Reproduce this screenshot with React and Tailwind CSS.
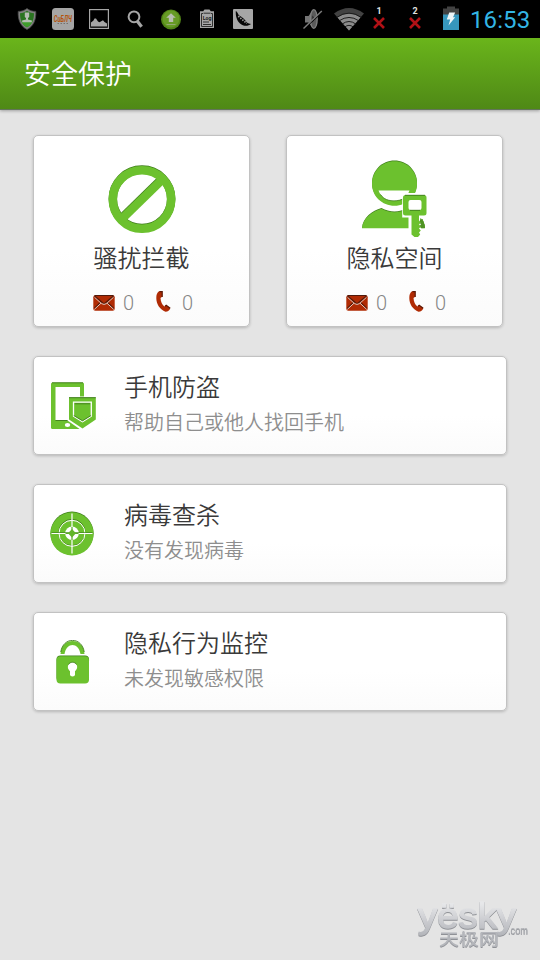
import React from 'react';

/* Status bar icons */
const ShieldUserIcon = () => (
  <svg className="ml-[17px] h-[22px] w-[20px]" viewBox="0 0 20 22">
    <path d="M10 0.5 C12.5 2.5 15.5 3.4 18.8 3.4 C19.2 12 16.5 18 10 21.5 C3.5 18 0.8 12 1.2 3.4 C4.5 3.4 7.5 2.5 10 0.5Z" fill="#808080" stroke="#4a4a4a" strokeWidth="0.8" />
    <path d="M10 2.8 C12 4.3 14.3 5 17 5.2 C17 12 14.8 16.5 10 19.3 C5.2 16.5 3 12 3 5.2 C5.7 5 8 4.3 10 2.8Z" fill="#2a7420" />
    <path d="M4 12.5c1.2 3 3 5.2 6 6.8 3-1.6 4.8-3.8 6-6.8z" fill="#3f9c2c" />
    <path d="M7.8 4.6h4.4V9l-1.2 1v1.5l3.8 1v1.7H5.2v-1.7l3.8-1V10L7.8 9z" fill="#b5bdb3" />
  </svg>
);

const CubnIcon = () => (
  <svg className="ml-[15px] h-[22px] w-[22px] overflow-visible" viewBox="0 0 22 22">
    <rect width="22" height="22" rx="3.5" fill="#a5a5a5" />
    <text x="1.8" y="14" textLength="18" lengthAdjust="spacingAndGlyphs" fontSize="9.5" fontWeight="700" fontStyle="italic" fill="#b4530b" fontFamily="Roboto, sans-serif">CuБЛЧ</text>
    <path d="M5.5 15.5h12" stroke="#6f6a66" strokeWidth="0.9" strokeDasharray="1.5 1.5" />
  </svg>
);

const PictureIcon = () => (
  <svg className="ml-[15px] h-[20px] w-[20px]" viewBox="0 0 20 20">
    <rect x="0.6" y="0.6" width="18.8" height="18.8" fill="none" stroke="#a6a6a6" strokeWidth="1.2" />
    <path d="M2 17.500v-4L4.500 11.500 5.500 9.500h1.500l2 3 1.500.8 3.500-2 1.500 1.700 2.500 1.500v3z" fill="#a6a6a6" />
  </svg>
);

const SearchIcon = () => (
  <svg className="ml-[18px] h-[20px] w-[17px]" viewBox="0 0 17 20">
    <circle cx="7" cy="7.8" r="5.4" fill="none" stroke="#a6a6a6" strokeWidth="2" />
    <path d="M10.2 12l4.4 5.8" stroke="#a6a6a6" strokeWidth="3.2" />
  </svg>
);

const UploadIcon = () => (
  <svg className="ml-[17px] h-[21px] w-[20px]" viewBox="0 0 20 21">
    <circle cx="10" cy="10.5" r="10" fill="#528517" />
    <circle cx="10" cy="10" r="8.4" fill="#679b25" />
    <path d="M10 4.2l4.8 4.6h-2.6V13H7.8V8.8H5.2z" fill="#b8bdb0" />
    <path d="M5.5 15.5h9" stroke="#9aac7d" strokeWidth="0.9" />
  </svg>
);

const LogIcon = () => (
  <svg className="ml-[19px] h-[20px] w-[14px]" viewBox="0 0 14 20">
    <path d="M0 2.2h3.2L4.5 0.5h5l1.3 1.7H14V19H0z" fill="#a6a6a6" />
    <path d="M3 4.5H1.5v13h11v-13H11M3.5 4.2h7" fill="none" stroke="#222" strokeWidth="0.9" />
    <text x="2.7" y="11" fontSize="6" fontWeight="700" fill="#1b1b1b" textLength="8.8" lengthAdjust="spacingAndGlyphs" fontFamily="Roboto, sans-serif">Log</text>
    <path d="M3 13h6M3 15.5h8" stroke="#222" strokeWidth="0.9" />
  </svg>
);

const PeasIcon = () => (
  <svg className="ml-[19px] h-[20px] w-[20px]" viewBox="0 0 20 20">
    <rect width="20" height="20" rx="1" fill="#a6a6a6" />
    <path d="M2.8 2c1.7.8 1.8 2.3 3 4.2 3.5 2 6.500 4.300 8 7.300 1.200 1 2.800 1.200 4.200 1.500-3 2.400-7.500 2.500-11-.5C3.700 11.500 2.500 6.500 2.800 2z" fill="#060606" />
    <path d="M5.3 7.2l8.500 7.300" stroke="#a6a6a6" strokeWidth="1.6" strokeDasharray="1.4 1.3" fill="none" />
  </svg>
);

const MuteIcon = () => (
  <svg className="h-[22px] w-[20px]" viewBox="0 0 20 22">
    <path d="M2 8h3.500l4-5.500v17L5.500 14.500H2z" fill="#747474" />
    <ellipse cx="10.8" cy="11" rx="3.4" ry="9.4" fill="#5a5a5a" stroke="#808080" strokeWidth="1.3" />
    <path d="M9.500 7.500q3 3.500 0 7z" fill="#111" />
    <path d="M0 21.500L18.500 4.500" stroke="#000" strokeWidth="1.6" />
    <path d="M0.500 20.500L18.800 3" stroke="#7c7c7c" strokeWidth="1.5" />
  </svg>
);

const WifiIcon = () => (
  <svg className="ml-[11px] h-[23px] w-[30px]" viewBox="0 0 30 23">
    <path d="M0 5.500Q15-5.500 30 5.500L15 22.600z" fill="#424242" />
    <path d="M3.500 9.500Q15 1.500 26.500 9.500L15 22.600z" fill="#8b8b8b" />
    <g fill="none" stroke="#111" strokeWidth="0.9">
      <path d="M2.500 9.500Q15 0.800 27.500 9.500" />
      <path d="M5.300 12.700Q15 6.200 24.700 12.700" />
      <path d="M8.200 16Q15 11 21.800 16" />
      <path d="M10.700 19Q15 15.700 19.300 19" />
    </g>
  </svg>
);

const SimSlot = ({ number }) => (
  <div className="flex h-[24px] w-[12px] flex-col items-center">
    <span className="font-['Roboto'] text-[9px] font-bold leading-[9px] text-[#e0e0e0]">{number}</span>
    <svg className="mt-[1px] h-[12px] w-[12px]" viewBox="0 0 12 12">
      <path d="M1 1l10 10M11 1L1 11" stroke="#b11116" strokeWidth="2.6" />
    </svg>
  </div>
);

const BatteryIcon = () => (
  <svg className="mb-[2px] ml-[22px] h-[24px] w-[16px]" viewBox="0 0 16 24">
    <path d="M4 0.500h8v2h4V9H0V2.500h4z" fill="#424242" />
    <path d="M0 8.500h16V24H0z" fill="#3797bd" />
    <path d="M6.200 6.500h6L10 11.200h2.200L5.500 19.500l1.700-6H3.800z" fill="#eef5f7" />
  </svg>
);

const StatusBar = () => (
  <div className="flex h-[38px] items-center bg-black">
    <ShieldUserIcon />
    <CubnIcon />
    <PictureIcon />
    <SearchIcon />
    <UploadIcon />
    <LogIcon />
    <PeasIcon />
    <div className="ml-auto flex items-center pr-[9px]">
      <MuteIcon />
      <WifiIcon />
      <div className="ml-[9px] flex gap-6">
        <SimSlot number="1" />
        <SimSlot number="2" />
      </div>
      <BatteryIcon />
      <span className="ml-[11px] w-[61px] whitespace-nowrap pt-[2px] font-['Roboto'] text-[24px] leading-[36px] tracking-[0.1px] text-[#33b5e5]">16:53</span>
    </div>
  </div>
);

/* Feature icons */
const BlockIcon = () => (
  <svg className="mb-[5px] ml-[1px] h-[68px] w-[68px]" viewBox="0 0 68 68">
    <g fill="none" strokeWidth="8.5">
      <g stroke="#3f7d1d">
        <circle cx="34" cy="33.8" r="29.2" />
        <path d="M13.500 53.300L54.500 13.300" />
      </g>
      <g stroke="#6cc12e">
        <circle cx="34" cy="34.5" r="29.2" />
        <path d="M13.700 54.100L54.700 14.100" />
      </g>
    </g>
  </svg>
);

const personHead = 'M24.5 0C37 0 47 10 47 22.5S37 44.5 24.5 44.5 2 35 2 22.5 12 0 24.5 0z';
const PrivacyIcon = () => (
  <svg className="h-[78px] w-[66px]" viewBox="0 0 66 78">
    <g transform="translate(8 0.5)">
      <path d={personHead} fill="#3f7d1d" />
      <path d={personHead} fill="#6cc12e" transform="translate(0 0.7)" />
      <path d="M8.500 30h31c-2.500 7-8.500 10.500-15.500 10.500S11 37 8.500 30z" fill="#fff" />
      <path d="M10.500 34c3.500 5 8 6.300 13.500 6.300 4 0 7.500-.6 10.500-3" fill="none" stroke="#3f7d1d" strokeWidth="0.8" />
    </g>
    <path d="M0 68C1 57 10 51 19.500 48c8 4.500 18 4.500 26 0C56 50 62 58 63 68z" fill="#3f7d1d" />
    <path d="M0 68.300C1 58 10 51.800 19.500 48.800c8 4.500 18 4.500 26 0C56 50.800 62 58 63 68.300z" fill="#6cc12e" />
    <path d="M40.200 33h27v26H60l-1.500 19H46.500V57.500h-6.300z" fill="#fff" />
    <path d="M58.500 58c2.500 2 4.500 6 4.500 10l-3.500.3-2.500-1.800 2-2-1.500-2z" fill="#4f9324" />
    <path fillRule="evenodd" d="M43.500 35h18.500q2.500 0 2.500 2.500v15.500q0 2.500-2.500 2.500H57v5l1.800 2-1.800 2 1.800 2-1.800 2 1.800 2-1.800 2 1.200 2-2.200 2.500h-3.500l-3-2.500V55.500h-6q-2.500 0-2.500-2.500V37.500q0-2.500 2.500-2.500zM48.500 40q-2 0-2 2v6q0 2 2 2h9q2 0 2-2v-6q0-2-2-2z" fill="#6cc12e" />
    <path d="M43 35.300h20M48 50.300h10" stroke="#3f7d1d" strokeWidth="0.9" />
  </svg>
);

const AntiTheftIcon = () => (
  <svg className="ml-[2px] h-[48px] w-[46px]" viewBox="0 0 46 48">
    <path d="M1.500 0.500h30q1.500 0 1.500 1.500V47H1.500Q0 47 0 45.500v-43.500Q0 0.500 1.500 0.500z" fill="#6cc12e" />
    <path d="M1 0.800h31" stroke="#3f7d1d" strokeWidth="0.9" />
    <path d="M4.500 5H29V38H4.500z" fill="#fff" />
    <path d="M4.500 38.500H20" stroke="#3f7d1d" strokeWidth="0.9" />
    <ellipse cx="16.5" cy="43" rx="2.7" ry="1.9" fill="#fff" />
    <path d="M16.500 14.500H46V43L34 48h-4L16.500 38.500z" fill="#fff" />
    <path d="M18 15.500h26.800v22L31.500 46.500 18 37.500z" fill="#6cc12e" />
    <path d="M18 15.700h26.800" stroke="#3f7d1d" strokeWidth="1" />
    <path d="M22.500 20.200h17.800v14l-8.800 5.500-9-5.500z" fill="none" stroke="#fff" strokeWidth="1.3" />
    <path d="M23.800 21.800h15.300M22.700 33.500l8.800 5.300 8.600-5.300" fill="none" stroke="#3f7d1d" strokeWidth="0.9" />
  </svg>
);

const VirusIcon = () => (
  <svg className="mr-[1px] h-[45px] w-[44px]" viewBox="0 0 44 45">
    <circle cx="22" cy="22.2" r="21.6" fill="#3f7d1d" />
    <circle cx="22" cy="22.9" r="21.6" fill="#6cc12e" />
    <circle cx="22" cy="21.5" r="13.2" fill="none" stroke="#3f7d1d" strokeWidth="0.9" />
    <circle cx="22" cy="22.3" r="13" fill="none" stroke="#fff" strokeWidth="1" />
    <circle cx="22" cy="22.3" r="6.8" fill="#fff" />
    <path d="M1.500 21.700h41" stroke="#3f7d1d" strokeWidth="0.8" />
    <path d="M22 2.500v40M1.500 22.500h41" stroke="#fff" strokeWidth="1.2" />
    <path d="M22 16v13M15.500 22.300h13" stroke="#5aa827" strokeWidth="1.2" />
    <path d="M22 18l4 4.300-4 4.200-4-4.200z" fill="#62b52a" />
  </svg>
);

const LockIcon = () => (
  <svg className="ml-[1px] h-[44px] w-[34px]" viewBox="0 0 34 44">
    <path d="M4.500 14C5.500-3.200 27.500-3.200 28.500 14H24.500C22.500 2 10.500 2 8.500 14z" fill="#6cc12e" />
    <path d="M4.800 12C7-3.500 26-3.500 28.200 12" fill="none" stroke="#3f7d1d" strokeWidth="0.9" />
    <rect x="0.5" y="15.5" width="32.5" height="26" rx="4" fill="#3f7d1d" />
    <rect x="0.5" y="16.3" width="32.5" height="27.2" rx="4" fill="#6cc12e" />
    <circle cx="16.5" cy="27" r="4.7" fill="#fff" />
    <path d="M14 28h5v6.500q0 2-2.500 2T14 34.500z" fill="#fff" />
    <path d="M12.500 24.500c1.500-3 6.500-3 8 0" fill="none" stroke="#3f7d1d" strokeWidth="0.9" />
  </svg>
);

const MailIcon = () => (
  <svg className="mb-px h-[16px] w-[22px]" viewBox="0 0 22 16">
    <rect x="0.3" y="0.3" width="21.4" height="15.4" rx="2" fill="#b02b04" />
    <path d="M1.500 0.500h19" stroke="#4f1a0c" strokeWidth="1" />
    <path d="M1.500 1.200L11 9l9.500-7.800M1.300 13.500L8 7M20.700 13.500L14 7" fill="none" stroke="#5b1a08" strokeWidth="1.5" />
    <path d="M1.500 2.300L8.500 8.600q2.500 1.700 5 0L20.500 2.300M1.300 14.400L8.200 8M20.700 14.400L13.800 8" fill="none" stroke="#f0d6cb" strokeWidth="0.9" />
  </svg>
);

const PhoneIcon = () => (
  <svg className="mb-[3px] ml-[21px] h-[21px] w-[15px]" viewBox="0 0 15 21">
    <path d="M3 .3h3.200v5.500L4.500 7c.3 3.800 1.500 6.700 4 8.500l1.600-1.500 4.200 3c-.8 2.500-2.300 3.700-4.800 3.700C4 18.500.3 13.500.3 7 .3 4 1 1.500 3 .3z" fill="#b02b04" />
    <path d="M3.500 .7h2.700v5.200M9 15.400l1.200-1.200 4 3" fill="none" stroke="#5b1a08" strokeWidth="1.2" />
  </svg>
);

const cardStyle = 'rounded-[5px] border border-[#c2c2c2] bg-gradient-to-b from-white from-60% to-[#fbfbfb] shadow-[0_1px_3px_rgba(0,0,0,0.2)]';

const FeatureCard = ({ icon, title, messages, calls }) => (
  <div className={`flex h-[192px] w-[217px] flex-col items-center ${cardStyle}`}>
    <div className="flex h-[102px] items-end">{icon}</div>
    <h2 className="mt-px text-[24px] font-[350] leading-[36px] text-[#3a3a3a]">{title}</h2>
    <div className="mt-[13px] flex h-[30px] items-center pl-1 font-['Roboto'] text-[20px] leading-[30px] text-[#868686]">
      <MailIcon />
      <span className="ml-[8px] w-[12px] font-light">{messages}</span>
      <PhoneIcon />
      <span className="ml-[11px] w-[12px] font-light">{calls}</span>
    </div>
  </div>
);

const FeatureRow = ({ icon, title, description }) => (
  <div className={`flex h-[99px] w-[474px] items-center ${cardStyle}`}>
    <div className="flex w-[77px] justify-center">{icon}</div>
    <div className="ml-[13px] pb-[4px]">
      <h2 className="text-[24px] font-[350] leading-[36px] text-[#3a3a3a]">{title}</h2>
      <p className="text-[20px] font-[350] leading-[35px] text-[#8e8e8e]">{description}</p>
    </div>
  </div>
);

const rows = [
  { id: 'theft', icon: <AntiTheftIcon />, title: '手机防盗', description: '帮助自己或他人找回手机' },
  { id: 'virus', icon: <VirusIcon />, title: '病毒查杀', description: '没有发现病毒' },
  { id: 'privacy', icon: <LockIcon />, title: '隐私行为监控', description: '未发现敏感权限' },
];

const Watermark = () => (
  <svg className="h-[60px] w-[124px] overflow-visible drop-shadow-[0.5px_1px_0_#8f9196]" viewBox="0 0 124 60">
    <defs>
      <linearGradient id="silver" x1="0" y1="0" x2="0" y2="1">
        <stop offset="0.2" stopColor="#e6e7e9" />
        <stop offset="0.6" stopColor="#cdced2" />
        <stop offset="1" stopColor="#b4b6bb" />
      </linearGradient>
    </defs>
    <text x="5" y="33" fontSize="35" textLength="98" lengthAdjust="spacingAndGlyphs" fill="url(#silver)" stroke="url(#silver)" strokeWidth="1.3" fontFamily="'Liberation Sans', sans-serif">yësky</text>
    <text x="95" y="39" fontSize="10" textLength="20" lengthAdjust="spacingAndGlyphs" fill="#aaacb1" fontFamily="'Liberation Sans', sans-serif">.com</text>
    <text x="26" y="50" fontSize="16" fontWeight="500" textLength="60" lengthAdjust="spacingAndGlyphs" fill="#b4b6bb" fontFamily="'Noto Sans CJK SC', sans-serif">天极网</text>
  </svg>
);

const App = () => {
  return (
    <div className="flex h-[960px] w-[540px] flex-col overflow-hidden bg-[#e4e4e4] font-['Noto_Sans_CJK_SC',sans-serif]">
      <StatusBar />
      <header className="flex h-[72px] items-center border-b border-[#62755a] bg-gradient-to-b from-[#6ab51b] to-[#4f8916] pb-[2px] pl-[24px] shadow-[0_1px_3px_rgba(0,0,0,0.3)]">
        <h1 className="text-[27px] font-[350] leading-[40px] text-white">安全保护</h1>
      </header>

      <main className="flex-1 px-[33px] pt-[25px]">
        <div className="flex gap-9">
          <FeatureCard icon={<BlockIcon />} title="骚扰拦截" messages={0} calls={0} />
          <FeatureCard icon={<PrivacyIcon />} title="隐私空间" messages={0} calls={0} />
        </div>
        <div className="mt-[29px] flex flex-col gap-[29px]">
          {rows.map((row) => (
            <FeatureRow key={row.id} icon={row.icon} title={row.title} description={row.description} />
          ))}
        </div>
      </main>

      <footer className="flex justify-end pb-[5px] pr-[3px]">
        <Watermark />
      </footer>
    </div>
  );
};

export default App;
